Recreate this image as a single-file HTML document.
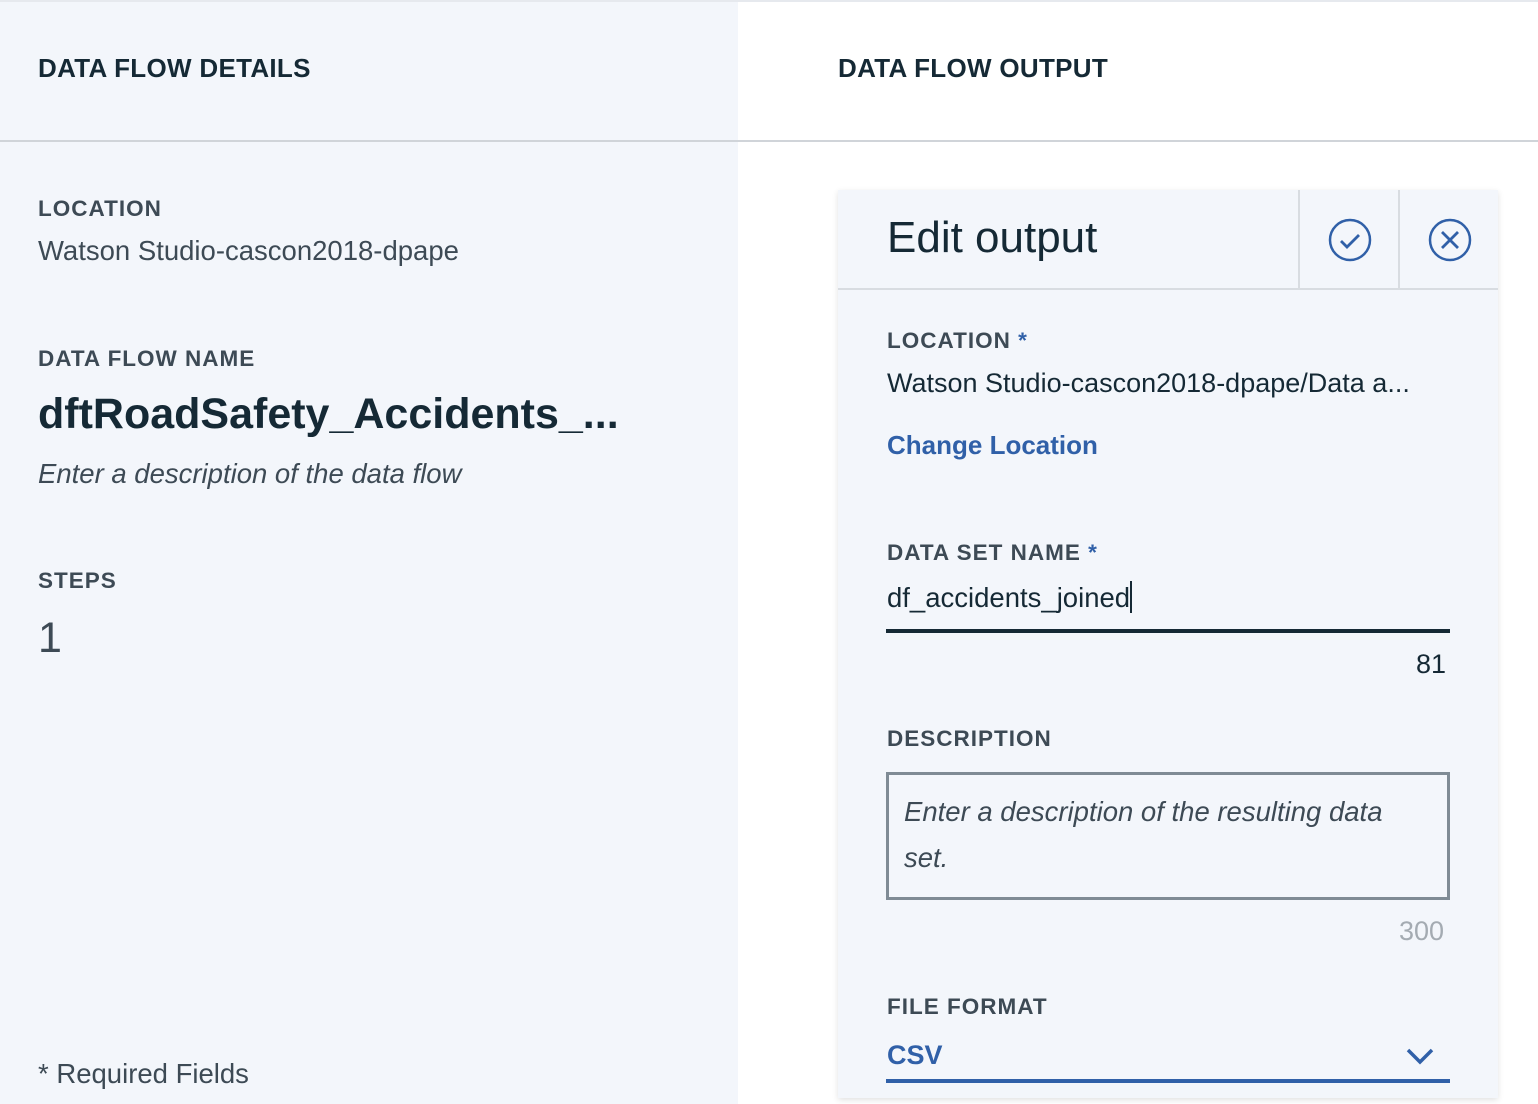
<!DOCTYPE html>
<html><head><meta charset="utf-8"><style>
*{margin:0;padding:0;box-sizing:border-box}
body{width:1538px;height:1104px;overflow:hidden;background:#fff;font-family:"Liberation Sans",sans-serif;color:#152935;position:relative}
.a{position:absolute;white-space:nowrap}
.lbl{font-size:22.5px;font-weight:bold;color:#3d4a55;letter-spacing:1px}
.val{font-size:27.5px;color:#3d4a55}
.blue{color:#3060a8}
</style></head><body>
<div class="a" style="left:0;top:0;width:738px;height:1104px;background:#f3f6fb"></div>
<div class="a" style="left:0;top:0;width:1538px;height:2px;background:#e6e9ee"></div>
<div class="a" style="left:0;top:140px;width:1538px;height:2px;background:#d0d4d9"></div>
<div class="a" style="left:38px;top:53px;font-size:26px;font-weight:bold;letter-spacing:0.3px">DATA FLOW DETAILS</div>
<div class="a" style="left:838px;top:53px;font-size:26px;font-weight:bold;letter-spacing:0.3px">DATA FLOW OUTPUT</div>

<div class="a lbl" style="left:38px;top:196px">LOCATION</div>
<div class="a val" style="left:38px;top:235px">Watson Studio-cascon2018-dpape</div>
<div class="a lbl" style="left:38px;top:346px">DATA FLOW NAME</div>
<div class="a" style="left:38px;top:390px;font-size:43px;font-weight:bold">dftRoadSafety_Accidents_...</div>
<div class="a val" style="left:38px;top:458px;font-style:italic">Enter a description of the data flow</div>
<div class="a lbl" style="left:38px;top:568px">STEPS</div>
<div class="a" style="left:38px;top:614px;font-size:43px;color:#3d4a55">1</div>
<div class="a val" style="left:38px;top:1058px">* Required Fields</div>

<div class="a" style="left:838px;top:190px;width:660px;height:908px;background:#f3f6fb;box-shadow:0 2px 6px rgba(0,0,0,0.12)"></div>
<div class="a" style="left:838px;top:288px;width:660px;height:2px;background:#d8dce1"></div>
<div class="a" style="left:1298px;top:190px;width:2px;height:99px;background:#d8dce1"></div>
<div class="a" style="left:1398px;top:190px;width:2px;height:99px;background:#d8dce1"></div>
<div class="a" style="left:887px;top:213px;font-size:44px">Edit output</div>
<svg class="a" style="left:1328px;top:218px" width="44" height="44" viewBox="0 0 44 44"><circle cx="22" cy="22" r="20" fill="none" stroke="#3060a8" stroke-width="2.5"/><path d="M13 23l6 6 12-12" fill="none" stroke="#3060a8" stroke-width="2.8"/></svg>
<svg class="a" style="left:1428px;top:218px" width="44" height="44" viewBox="0 0 44 44"><circle cx="22" cy="22" r="20" fill="none" stroke="#3060a8" stroke-width="2.5"/><path d="M14 14l16 16M30 14l-16 16" fill="none" stroke="#3060a8" stroke-width="2.8"/></svg>

<div class="a lbl" style="left:887px;top:328px">LOCATION <span class="blue">*</span></div>
<div class="a" style="left:887px;top:368px;font-size:27px;color:#152935">Watson Studio-cascon2018-dpape/Data a...</div>
<div class="a blue" style="left:887px;top:430px;font-size:26px;font-weight:bold">Change Location</div>

<div class="a lbl" style="left:887px;top:540px">DATA SET NAME <span class="blue">*</span></div>
<div class="a" style="left:887px;top:581px;font-size:27.5px">df_accidents_joined<span style="display:inline-block;width:2px;height:32px;background:#152935;vertical-align:-6px"></span></div>
<div class="a" style="left:886px;top:629px;width:564px;height:4px;background:#152935"></div>
<div class="a" style="left:1416px;top:649px;font-size:27px">81</div>

<div class="a lbl" style="left:887px;top:726px">DESCRIPTION</div>
<div class="a" style="left:886px;top:772px;width:564px;height:128px;border:3px solid #7f8b95"></div>
<div class="a" style="left:904px;top:789px;font-size:27.5px;font-style:italic;color:#3d4a55;line-height:46px;white-space:normal;width:500px">Enter a description of the resulting data set.</div>
<div class="a" style="left:1399px;top:916px;font-size:27px;color:#a4abb2">300</div>

<div class="a lbl" style="left:887px;top:994px">FILE FORMAT</div>
<div class="a blue" style="left:887px;top:1040px;font-size:27px;font-weight:bold">CSV</div>
<svg class="a" style="left:1404px;top:1046px" width="32" height="20" viewBox="0 0 32 20"><path d="M4 4l12 12 12-12" fill="none" stroke="#3060a8" stroke-width="3.5"/></svg>
<div class="a" style="left:886px;top:1079px;width:564px;height:4px;background:#3060a8"></div>
</body></html>
